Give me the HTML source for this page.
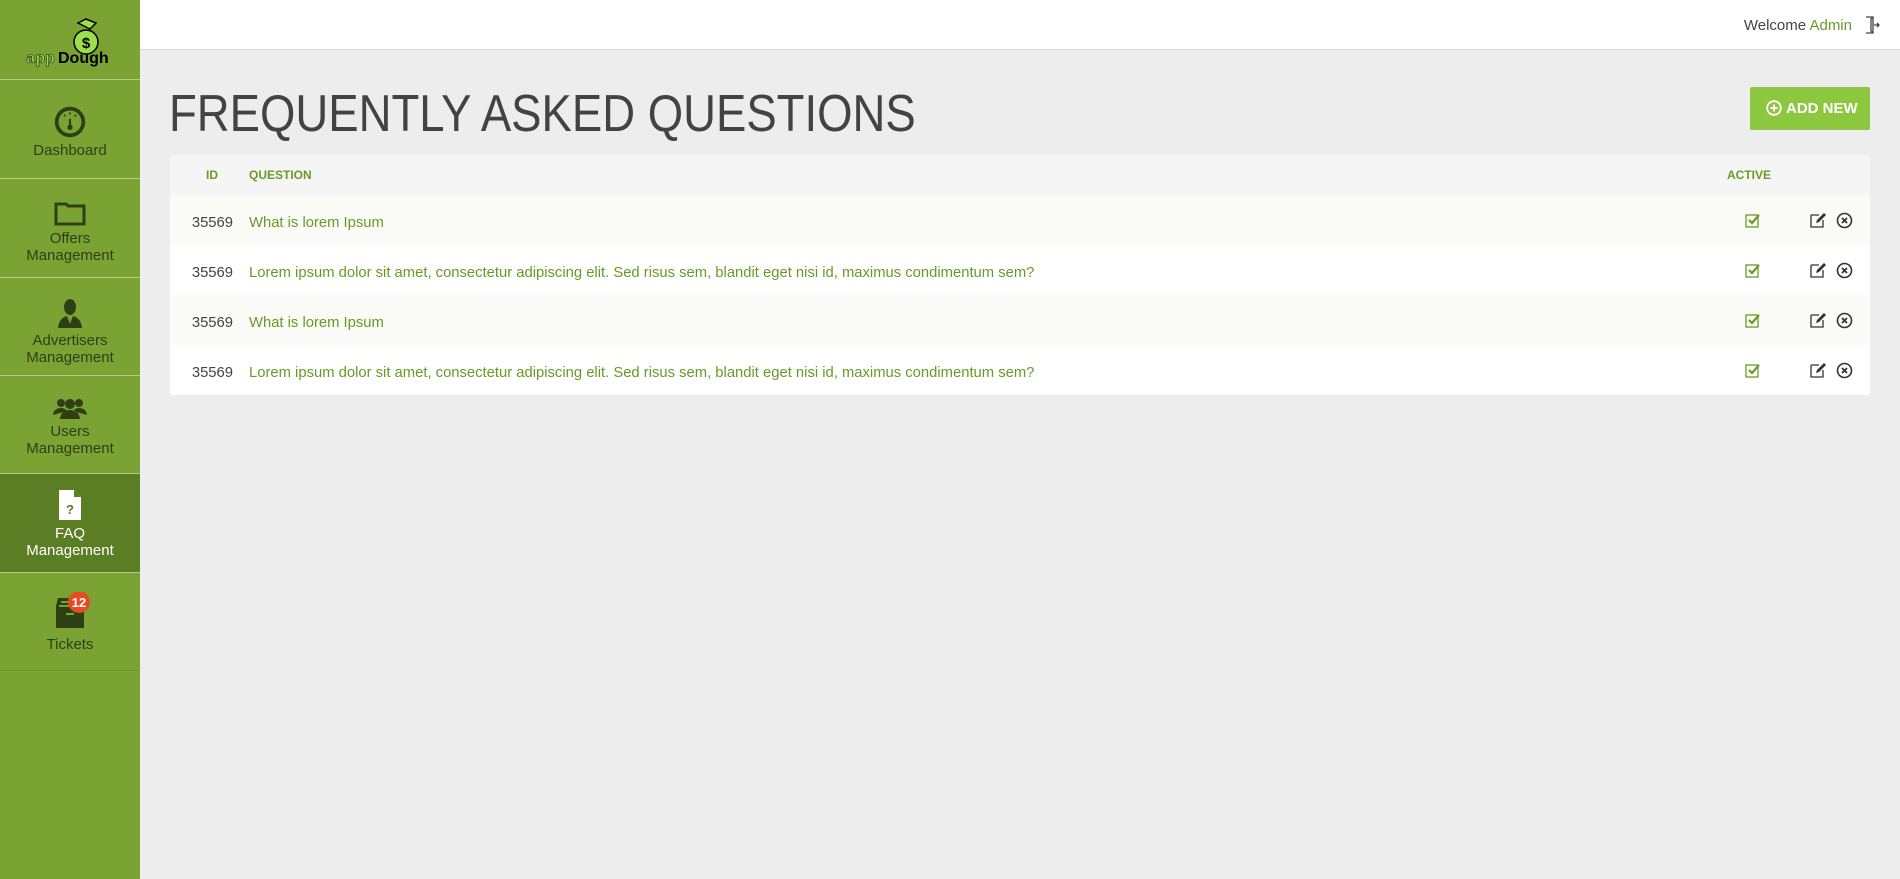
<!DOCTYPE html>
<html><head><meta charset="utf-8"><style>
*{box-sizing:border-box;margin:0;padding:0}
body{width:1900px;height:879px;background:#ededed;font-family:"Liberation Sans",sans-serif;position:relative;overflow:hidden}
.side{position:absolute;left:0;top:0;width:140px;height:879px;background:#7aa334}
.logo{height:80px;border-bottom:1px solid #b3cc88;position:relative}
.item{position:absolute;left:0;width:140px;border-bottom:1px solid #b3cc88;text-align:center;color:#2f3f15;font-size:15px;line-height:17px}
.item svg{display:block;margin:0 auto 4px}
.item.act{background:#5b7d23;color:#fff}
.top{position:absolute;left:140px;top:0;right:0;height:50px;background:#fff;border-bottom:1px solid #d8d8d8}
.welcome{position:absolute;right:48px;top:17px;font-size:15px;color:#444}
.welcome b{font-weight:normal;color:#6a9a25}
h1{position:absolute;left:169px;top:84px;font-size:52px;font-weight:normal;color:#434343;transform:scaleX(0.875);transform-origin:0 0;white-space:nowrap}
.btn{position:absolute;left:1750px;top:87px;width:120px;height:43px;background:#8dc63f;border-radius:2px;color:#fff;font-size:15px;font-weight:bold;line-height:43px;padding-left:16px}
.tbl{position:absolute;left:170px;top:155px;width:1700px;background:#fff;border-radius:3px}
.row{height:50px;position:relative;font-size:14.8px;line-height:56px}
.hd{height:40px;background:#f5f5f5;line-height:40px;font-size:12px;font-weight:bold;color:#6a9a25}
.row:nth-child(2),.row:nth-child(4){background:#fafbf7}
.id{position:absolute;right:1637px;color:#444}
.q{position:absolute;left:79px;color:#6a9a25}
.a{position:absolute;left:1575px;top:17px}
.e{position:absolute;left:1640px;top:17px}
.x{position:absolute;left:1666px;top:17px}
</style></head><body>
<div class="side">
<div class="logo">
<svg width="100" height="60" style="position:absolute;left:20px;top:15px" viewBox="0 0 100 60">
<path d="M58 8 l8 -4 l10 4 l-6 6z" fill="#9be04a" stroke="#000" stroke-width="1.5"/>
<ellipse cx="66" cy="27" rx="12" ry="12" fill="#9be04a" stroke="#000" stroke-width="1.5"/>
<text x="66" y="33" font-size="15" font-weight="bold" text-anchor="middle" font-family="Liberation Sans">$</text>
<text x="6" y="48" font-size="16" font-weight="bold" font-family="Liberation Mono" fill="#9be04a" stroke="#222" stroke-width=".6">app</text>
<text x="38" y="48" font-size="16" font-weight="bold" font-family="Liberation Sans" fill="#000">Dough</text>
</svg></div>
<div class="item" style="top:81px;height:98px;padding-top:25px">
<svg width="32" height="32" viewBox="0 0 30 30"><circle cx="15" cy="15" r="12.5" fill="none" stroke="#2f3f15" stroke-width="3.5"/><rect x="14" y="12" width="2" height="8" fill="#2f3f15"/><circle cx="15" cy="20" r="2.5" fill="#2f3f15"/><circle cx="15" cy="7" r="1" fill="#2f3f15"/><circle cx="10" cy="9" r="1" fill="#2f3f15"/><circle cx="20" cy="9" r="1" fill="#2f3f15"/></svg>Dashboard</div>
<div class="item" style="top:179px;height:99px;padding-top:23px">
<svg width="32" height="24" viewBox="0 0 32 24"><path d="M2 2h10l2 2h16v18H2z" fill="none" stroke="#2f3f15" stroke-width="3"/></svg>Offers<br>Management</div>
<div class="item" style="top:278px;height:98px;padding-top:20px">
<svg width="30" height="30" viewBox="0 0 30 30"><ellipse cx="15" cy="9" rx="6" ry="8" fill="#2f3f15"/><path d="M3 30 q1-10 9-12 l3 8 l3-8 q8 2 9 12z" fill="#2f3f15"/></svg>Advertisers<br>Management</div>
<div class="item" style="top:377px;height:97px;padding-top:20px">
<svg width="34" height="22" viewBox="0 0 34 22"><circle cx="8" cy="6" r="4" fill="#2f3f15"/><circle cx="26" cy="6" r="4" fill="#2f3f15"/><circle cx="17" cy="7" r="5" fill="#2f3f15"/><path d="M0 18q1-7 8-7q4 0 6 3M34 18q-1-7-8-7q-4 0-6 3M7 22q1-9 10-9t10 9z" fill="#2f3f15"/></svg>Users<br>Management</div>
<div class="item act" style="top:474px;height:99px;padding-top:15px">
<svg width="24" height="32" viewBox="0 0 24 32"><path d="M1 1h15l7 7v23H1z" fill="#fff"/><path d="M16 1v7h7" fill="#5b7d23"/><text x="12" y="25" font-size="13" font-weight="bold" text-anchor="middle" fill="#5b7d23" font-family="Liberation Sans">?</text></svg>FAQ<br>Management</div>
<div class="item" style="top:574px;height:97px;padding-top:18px;border-bottom-color:#6d9530">
<svg width="40" height="38" viewBox="0 0 40 38" style="margin-bottom:6px"><path d="M6 14h28v22H6z" fill="#2f3f15"/><path d="M8 6h24l2 8H6z" fill="#2f3f15"/><rect x="11" y="9" width="18" height="2" fill="#7aa334"/><rect x="9" y="13" width="22" height="2" fill="#7aa334"/><rect x="16" y="21" width="8" height="2" fill="#7aa334"/><circle cx="29" cy="10" r="11" fill="#e84a23"/><text x="29" y="15" font-size="13" font-weight="bold" fill="#fff" text-anchor="middle" font-family="Liberation Sans">12</text></svg>Tickets</div>
</div>
<div class="top"><div class="welcome">Welcome <b>Admin</b></div>
<svg style="position:absolute;right:20px;top:16px" width="16" height="18" viewBox="0 0 16 18"><path d="M2 1h7v16H2M9 1l-2 2v12l2 2" fill="none" stroke="#444" stroke-width="1.3"/><path d="M10 9h5M13 7l2 2-2 2" stroke="#444" stroke-width="1.3" fill="none"/></svg></div>
<h1>FREQUENTLY ASKED QUESTIONS</h1>
<div class="btn"><svg width="16" height="16" viewBox="0 0 16 16" style="vertical-align:-3px;margin-right:4px"><circle cx="8" cy="8" r="6.8" fill="none" stroke="#fff" stroke-width="1.8"/><path d="M8 4.5v7M4.5 8h7" stroke="#fff" stroke-width="2"/></svg>ADD NEW</div>
<div class="tbl">
<div class="row hd"><span style="position:absolute;left:36px">ID</span><span class="q" style="color:#6a9a25">QUESTION</span><span style="position:absolute;left:1557px">ACTIVE</span></div>
<div class="row"><span class="id">35569</span><span class="q">What is lorem Ipsum</span>
<svg class="a" width="16" height="16" viewBox="0 0 16 16"><rect x="1" y="3" width="12" height="12" fill="none" stroke="#6a9a25" stroke-width="1.3"/><path d="M4 8l3 3 7-8" stroke="#6a9a25" stroke-width="2.2" fill="none"/></svg>
<svg class="e" width="17" height="16" viewBox="0 0 17 16"><path d="M1 3h8M1 3v12h12V8" fill="none" stroke="#333" stroke-width="1.3"/><path d="M6 11l1-3 7-7 2 2-7 7z" fill="#333"/></svg>
<svg class="x" width="17" height="17" viewBox="0 0 17 17"><circle cx="8.5" cy="8.5" r="7" fill="none" stroke="#333" stroke-width="1.6"/><path d="M6 6l5 5M11 6l-5 5" stroke="#333" stroke-width="1.8"/></svg></div>
<div class="row"><span class="id">35569</span><span class="q">Lorem ipsum dolor sit amet, consectetur adipiscing elit. Sed risus sem, blandit eget nisi id, maximus condimentum sem?</span>
<svg class="a" width="16" height="16" viewBox="0 0 16 16"><rect x="1" y="3" width="12" height="12" fill="none" stroke="#6a9a25" stroke-width="1.3"/><path d="M4 8l3 3 7-8" stroke="#6a9a25" stroke-width="2.2" fill="none"/></svg>
<svg class="e" width="17" height="16" viewBox="0 0 17 16"><path d="M1 3h8M1 3v12h12V8" fill="none" stroke="#333" stroke-width="1.3"/><path d="M6 11l1-3 7-7 2 2-7 7z" fill="#333"/></svg>
<svg class="x" width="17" height="17" viewBox="0 0 17 17"><circle cx="8.5" cy="8.5" r="7" fill="none" stroke="#333" stroke-width="1.6"/><path d="M6 6l5 5M11 6l-5 5" stroke="#333" stroke-width="1.8"/></svg></div>
<div class="row"><span class="id">35569</span><span class="q">What is lorem Ipsum</span>
<svg class="a" width="16" height="16" viewBox="0 0 16 16"><rect x="1" y="3" width="12" height="12" fill="none" stroke="#6a9a25" stroke-width="1.3"/><path d="M4 8l3 3 7-8" stroke="#6a9a25" stroke-width="2.2" fill="none"/></svg>
<svg class="e" width="17" height="16" viewBox="0 0 17 16"><path d="M1 3h8M1 3v12h12V8" fill="none" stroke="#333" stroke-width="1.3"/><path d="M6 11l1-3 7-7 2 2-7 7z" fill="#333"/></svg>
<svg class="x" width="17" height="17" viewBox="0 0 17 17"><circle cx="8.5" cy="8.5" r="7" fill="none" stroke="#333" stroke-width="1.6"/><path d="M6 6l5 5M11 6l-5 5" stroke="#333" stroke-width="1.8"/></svg></div>
<div class="row"><span class="id">35569</span><span class="q">Lorem ipsum dolor sit amet, consectetur adipiscing elit. Sed risus sem, blandit eget nisi id, maximus condimentum sem?</span>
<svg class="a" width="16" height="16" viewBox="0 0 16 16"><rect x="1" y="3" width="12" height="12" fill="none" stroke="#6a9a25" stroke-width="1.3"/><path d="M4 8l3 3 7-8" stroke="#6a9a25" stroke-width="2.2" fill="none"/></svg>
<svg class="e" width="17" height="16" viewBox="0 0 17 16"><path d="M1 3h8M1 3v12h12V8" fill="none" stroke="#333" stroke-width="1.3"/><path d="M6 11l1-3 7-7 2 2-7 7z" fill="#333"/></svg>
<svg class="x" width="17" height="17" viewBox="0 0 17 17"><circle cx="8.5" cy="8.5" r="7" fill="none" stroke="#333" stroke-width="1.6"/><path d="M6 6l5 5M11 6l-5 5" stroke="#333" stroke-width="1.8"/></svg></div>
</div>
</body></html>
